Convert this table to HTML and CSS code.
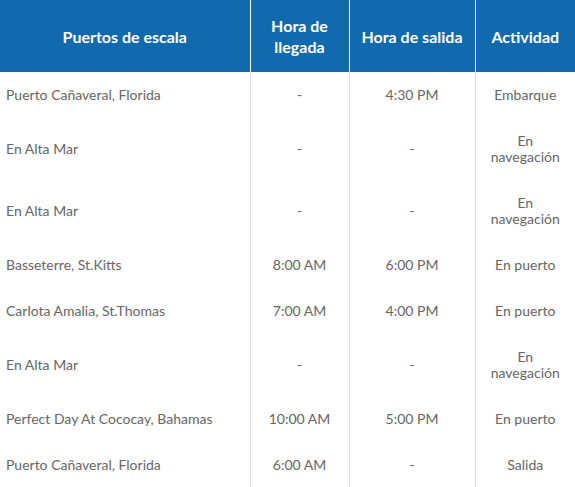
FILE: index.html
```html
<!DOCTYPE html>
<html lang="es">
<head>
<meta charset="utf-8">
<link rel="stylesheet" href="styles.css">
</head>
<body>
<table class="itinerary">
  <colgroup>
    <col class="c-port">
    <col class="c-arr">
    <col class="c-dep">
    <col class="c-act">
  </colgroup>
  <thead>
    <tr>
      <th>Puertos de escala</th>
      <th>Hora de llegada</th>
      <th>Hora de salida</th>
      <th>Actividad</th>
    </tr>
  </thead>
  <tbody>
    <tr><td>Puerto Cañaveral, Florida</td><td>-</td><td>4:30 PM</td><td>Embarque</td></tr>
    <tr><td>En Alta Mar</td><td>-</td><td>-</td><td>En navegación</td></tr>
    <tr><td>En Alta Mar</td><td>-</td><td>-</td><td>En navegación</td></tr>
    <tr><td>Basseterre, St.Kitts</td><td>8:00 AM</td><td>6:00 PM</td><td>En puerto</td></tr>
    <tr><td>Carlota Amalia, St.Thomas</td><td>7:00 AM</td><td>4:00 PM</td><td>En puerto</td></tr>
    <tr><td>En Alta Mar</td><td>-</td><td>-</td><td>En navegación</td></tr>
    <tr><td>Perfect Day At Cococay, Bahamas</td><td>10:00 AM</td><td>5:00 PM</td><td>En puerto</td></tr>
    <tr><td>Puerto Cañaveral, Florida</td><td>6:00 AM</td><td>-</td><td>Salida</td></tr>
  </tbody>
</table>
</body>
</html>
```

FILE: styles.css
```css
html, body {
  margin: 0;
  padding: 0;
  background: #ffffff;
}

body {
  font-family: Lato, "Open Sans", "Liberation Sans", sans-serif;
}

.itinerary {
  width: 575px;
  border-collapse: collapse;
  table-layout: fixed;
}

.c-port { width: 250px; }
.c-arr { width: 99px; }
.c-dep { width: 126px; }
.c-act { width: 100px; }

.itinerary th {
  background: #106aad;
  color: #ffffff;
  font-weight: 700;
  font-size: 16px;
  line-height: 21px;
  padding: 15px 8px;
  text-align: center;
  vertical-align: middle;
  border-left: 1px solid #ffffff;
}

.itinerary td {
  color: #666666;
  font-size: 14px;
  line-height: 16px;
  padding: 15px 8px;
  text-align: center;
  vertical-align: middle;
  border-left: 1px solid #dddddd;
}

.itinerary th:first-child,
.itinerary td:first-child {
  border-left: none;
}

.itinerary td:first-child {
  text-align: left;
  padding-left: 6px;
}
```
